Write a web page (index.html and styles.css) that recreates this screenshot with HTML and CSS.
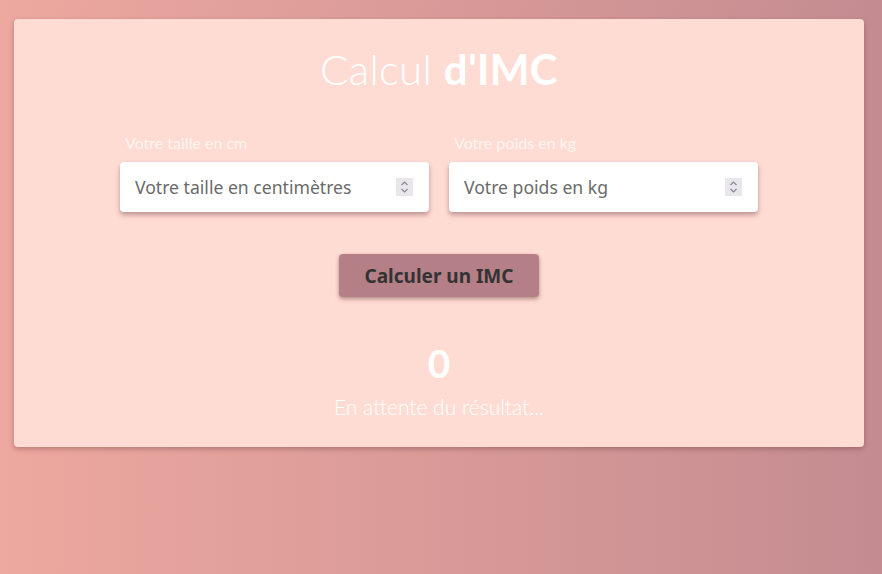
FILE: index.html
```html
<!DOCTYPE html>
<html lang="fr">
<head>
<meta charset="utf-8">
<title>Calcul d'IMC</title>
<link rel="stylesheet" href="styles.css">
</head>
<body>
<main class="card">
  <h1 class="title">Calcul <strong>d'IMC</strong></h1>
  <div class="fields">
    <div class="field">
      <label class="label">Votre taille en cm</label>
      <div class="box">
        <input class="input" type="text" placeholder="Votre taille en centimètres">
        <span class="spin"><svg width="9" height="14" viewBox="0 0 9 14"><path d="M1.5 5 L4.5 2 L7.5 5 M1.5 9 L4.5 12 L7.5 9" fill="none" stroke="#8a8890" stroke-width="1.2"/></svg></span>
      </div>
    </div>
    <div class="field">
      <label class="label">Votre poids en kg</label>
      <div class="box">
        <input class="input" type="text" placeholder="Votre poids en kg">
        <span class="spin"><svg width="9" height="14" viewBox="0 0 9 14"><path d="M1.5 5 L4.5 2 L7.5 5 M1.5 9 L4.5 12 L7.5 9" fill="none" stroke="#8a8890" stroke-width="1.2"/></svg></span>
      </div>
    </div>
  </div>
  <button class="btn">Calculer un IMC</button>
  <div class="result">0</div>
  <p class="status">En attente du résultat...</p>
</main>
</body>
</html>
```
FILE: styles.css
```css
* { box-sizing: border-box; }
html, body { height: 100%; }
body {
  margin: 0;
  padding: 19px 18px 0 14px;
  background: linear-gradient(to right, #eda89f, #c48c91);
  font-family: "Lato", sans-serif;
}
.card {
  background: #ffdcd3;
  border-radius: 4px;
  box-shadow: 0 2px 5px rgba(90, 40, 40, 0.35);
  height: 428px;
  display: flex;
  flex-direction: column;
  align-items: center;
  padding-top: 26px;
}
.title {
  margin: 0;
  font-family: "Lato", sans-serif;
  font-weight: 300;
  font-size: 42px;
  line-height: 48px;
  color: #fff;
  letter-spacing: 0.3px;
}
.title strong { font-weight: 700; }
.fields {
  display: flex;
  gap: 20px;
  margin-top: 40px;
}
.field { display: flex; flex-direction: column; width: 309px; }
.label {
  color: #fff4f0;
  font-size: 16px;
  line-height: 20px;
  padding-left: 5px;
  margin-bottom: 9px;
}
.box {
  height: 50px;
  background: #fff;
  border-radius: 4px;
  box-shadow: 0 3px 5px rgba(110, 60, 70, 0.45);
  display: flex;
  align-items: center;
  padding: 0 16px 0 15px;
}
.input {
  flex: 1;
  border: 0;
  outline: 0;
  background: transparent;
  font-family: "Noto Sans", "Open Sans", sans-serif;
  font-size: 17.6px;
  color: #666;
  padding: 0;
  min-width: 0;
}
.input::placeholder { color: #6a6a6a; opacity: 1; }
.spin {
  width: 17px;
  height: 18px;
  background: #e9e6ec;
  display: flex;
  align-items: center;
  justify-content: center;
}
.btn {
  margin-top: 42px;
  width: 200px;
  height: 43px;
  border: 0;
  border-radius: 4px;
  background: #b57f87;
  color: #333;
  font-family: "Noto Sans", "Open Sans", sans-serif;
  font-weight: 700;
  font-size: 19px;
  box-shadow: 0 2px 4px rgba(80, 40, 40, 0.45);
}
.result {
  margin-top: 44px;
  font-family: "Lato", sans-serif;
  font-weight: 700;
  font-size: 39px;
  line-height: 44px;
  color: #fff;
}
.status {
  margin: 10px 0 0;
  font-family: "Lato", sans-serif;
  font-weight: 300;
  font-size: 21px;
  line-height: 24px;
  color: #fff;
}
```
